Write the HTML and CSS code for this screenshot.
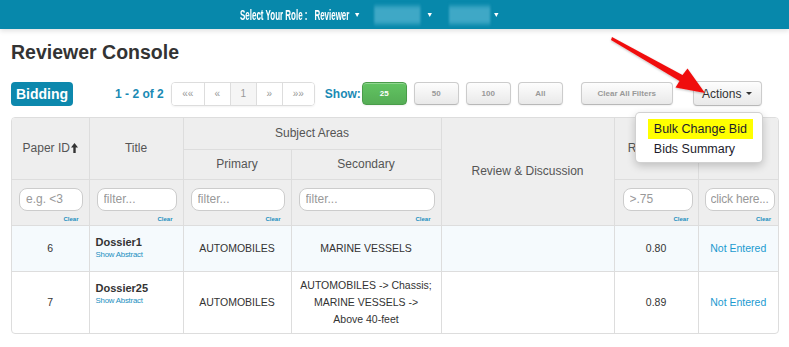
FILE: index.html
```html
<!DOCTYPE html>
<html>
<head>
<meta charset="utf-8">
<link rel="stylesheet" href="styles.css">
</head>
<body>
<header class="topbar">
  <nav class="nav">
    <span class="nav-label">Select Your Role :</span>
    <span class="nav-item">Reviewer<i class="caret"></i></span>
    <span class="nav-item i2"><span class="blur bw1"></span><i class="caret ca2"></i></span>
    <span class="nav-item i3"><span class="blur bw2"></span><i class="caret ca3"></i></span>
  </nav>
</header>

<main class="page">
  <h1 class="title">Reviewer Console</h1>

  <div class="toolbar">
    <span class="label">Bidding</span>
    <span class="count">1 - 2 of 2</span>
    <div class="pager">
      <span class="pg pg-wide">&laquo;&laquo;</span>
      <span class="pg">&laquo;</span>
      <span class="pg pg-active">1</span>
      <span class="pg">&raquo;</span>
      <span class="pg pg-wide">&raquo;&raquo;</span>
    </div>
    <span class="show">Show:</span>
    <div class="sizes">
      <button class="btn btn-size btn-green">25</button>
      <button class="btn btn-size">50</button>
      <button class="btn btn-size">100</button>
      <button class="btn btn-size">All</button>
    </div>
    <button class="btn btn-clear">Clear All Filters</button>
    <div class="actions">
      <button class="btn btn-actions">Actions<i class="caret dark"></i></button>
      <ul class="menu">
        <li class="menu-item hl">Bulk Change Bid</li>
        <li class="menu-item">Bids Summary</li>
      </ul>
    </div>
  </div>

  <div class="grid-wrap">
    <table class="grid">
      <colgroup>
        <col class="col1"><col class="col2"><col class="col3"><col class="col4"><col class="col5"><col class="col6"><col class="col7">
      </colgroup>
      <thead>
        <tr class="hr1">
          <th rowspan="2">Paper ID<svg class="sort" width="7" height="10" viewBox="0 0 7 10"><path d="M3.5 0 L7 4.5 H4.7 V10 H2.3 V4.5 H0 Z" fill="#333"/></svg></th>
          <th rowspan="2">Title</th>
          <th colspan="2">Subject Areas</th>
          <th rowspan="3">Review &amp; Discussion</th>
          <th rowspan="2">Relevance</th>
          <th rowspan="2">Bid</th>
        </tr>
        <tr class="hr2">
          <th>Primary</th>
          <th>Secondary</th>
        </tr>
        <tr class="filters">
          <td><input class="flt" placeholder="e.g. &lt;3"><div class="clear">Clear</div></td>
          <td><input class="flt" placeholder="filter..."><div class="clear">Clear</div></td>
          <td><input class="flt" placeholder="filter..."><div class="clear">Clear</div></td>
          <td><input class="flt" placeholder="filter..."><div class="clear">Clear</div></td>
          <td class="rel-f"><input class="flt" placeholder="&gt;.75"><div class="clear">Clear</div></td>
          <td class="bid-f"><input class="flt flt-tight" placeholder="click here..."><div class="clear">Clear</div></td>
        </tr>
      </thead>
      <tbody>
        <tr class="row odd">
          <td class="num">6</td>
          <td class="ttl"><div class="doc">Dossier1</div><div class="abs">Show Abstract</div></td>
          <td class="ctr">AUTOMOBILES</td>
          <td class="ctr">MARINE VESSELS</td>
          <td></td>
          <td class="ctr">0.80</td>
          <td class="ctr link">Not Entered</td>
        </tr>
        <tr class="row">
          <td class="num">7</td>
          <td class="ttl"><div class="doc">Dossier25</div><div class="abs">Show Abstract</div></td>
          <td class="ctr">AUTOMOBILES</td>
          <td class="ctr multi">AUTOMOBILES -&gt; Chassis;<br>MARINE VESSELS -&gt;<br>Above 40-feet</td>
          <td></td>
          <td class="ctr">0.89</td>
          <td class="ctr link">Not Entered</td>
        </tr>
      </tbody>
    </table>
  </div>
</main>

<svg class="arrow" width="789" height="347" viewBox="0 0 789 347">
  <defs>
    <filter id="sh" x="-10%" y="-10%" width="120%" height="130%">
      <feDropShadow dx="0" dy="1" stdDeviation="1" flood-color="#000" flood-opacity="0.25"/>
    </filter>
  </defs>
  <polygon filter="url(#sh)" fill="#f01010" points="612,37 682.5,75 687.5,68.5 705,93 675.5,87.5 679.5,81 611,40"/>
</svg>
</body>
</html>
```

FILE: styles.css
```css
* { box-sizing: border-box; }

body {
  margin: 0;
  position: relative;
  font-family: "Liberation Sans", Arial, sans-serif;
  color: #333;
  background: #fff;
}

/* ---------- top bar ---------- */
.topbar {
  height: 29px;
  background: #0788ab;
  box-shadow: 0 2px 5px rgba(0, 0, 0, 0.12);
  display: flex;
  align-items: center;
  padding-left: 240px;
  color: #fff;
}
.nav {
  display: flex;
  align-items: center;
  font-family: "Liberation Sans", Arial, sans-serif;
  font-weight: bold;
  font-size: 14.5px;
  white-space: nowrap;
  transform: scaleX(0.55);
  transform-origin: 0 50%;
}
.nav-label { margin-right: 12.5px; }
.nav-item {
  display: flex;
  align-items: center;
}
.nav-item.i2 { margin-left: 27.5px; }
.nav-item.i3 { margin-left: 31px; }
.caret {
  display: inline-block;
  width: 0;
  height: 0;
  border-left: 4px solid transparent;
  border-right: 4px solid transparent;
  border-top: 4px solid #fff;
  margin-left: 10px;
}
.caret.ca2 { margin-left: 13px; }
.caret.ca3 { margin-left: 7px; }
.blur {
  display: inline-block;
  height: 18px;
  background: rgba(120, 200, 225, 0.5);
  filter: blur(2px);
}
.blur.bw1 { width: 84px; }
.blur.bw2 { width: 75px; }

/* ---------- page ---------- */
.page { padding: 0 10px 0 11px; }

.title {
  margin: 12px 0 18px;
  font-size: 19.5px;
  line-height: 22px;
  font-weight: bold;
  color: #333;
}

.toolbar {
  display: flex;
  align-items: center;
  height: 25px;
  margin-bottom: 11px;
}
.label {
  display: inline-block;
  height: 24px;
  line-height: 24px;
  padding: 0 5px;
  background: #0d88ad;
  color: #fff;
  font-weight: bold;
  font-size: 14px;
  border-radius: 4px;
}
.count {
  margin-left: 42px;
  color: #1a8ab4;
  font-weight: bold;
  font-size: 12px;
}
.pager {
  display: flex;
  margin-left: 7px;
  height: 24px;
  border: 1px solid #ddd;
  border-radius: 4px;
  overflow: hidden;
  box-shadow: 0 1px 2px rgba(0, 0, 0, 0.05);
}
.pg {
  width: 26px;
  text-align: center;
  line-height: 22px;
  font-size: 10px;
  color: #999;
  background: #fff;
  border-left: 1px solid #ddd;
}
.pg:first-child { border-left: none; }
.pg-wide { width: 32px; }
.pg-active { background: #f5f5f5; }

.show {
  margin-left: 10px;
  margin-right: 1px;
  color: #1a8ab4;
  font-weight: bold;
  font-size: 12px;
}
.sizes {
  display: flex;
  gap: 7px;
}
.btn {
  font-family: "Liberation Sans", Arial, sans-serif;
  height: 23px;
  padding: 0;
  border: 1px solid #ccc;
  border-bottom-color: #b8b8b8;
  border-radius: 4px;
  background: linear-gradient(#fdfdfd, #e9e9e9);
  box-shadow: inset 0 1px 0 rgba(255, 255, 255, 0.3), 0 1px 2px rgba(0, 0, 0, 0.06);
  color: #999;
  cursor: pointer;
}
.btn-size {
  width: 45px;
  font-size: 8px;
  font-weight: bold;
}
.btn-green {
  background: linear-gradient(#62c462, #55ad55);
  border-color: #4a9c4a;
  color: #fff;
}
.btn-clear {
  width: 92px;
  margin-left: 18px;
  font-size: 8px;
  font-weight: bold;
}
.actions {
  position: relative;
  margin-left: 20px;
}
.btn-actions {
  display: flex;
  align-items: center;
  justify-content: center;
  width: 69px;
  height: 25px;
  font-size: 12px;
  color: #333;
}
.caret.dark {
  border-left-width: 3px;
  border-right-width: 3px;
  border-top: 3px solid #333;
  margin-left: 5px;
}
.menu {
  position: absolute;
  top: 31px;
  right: -1px;
  width: 128px;
  margin: 0;
  padding: 6px 0 3px;
  list-style: none;
  background: #fff;
  border: 1px solid rgba(0, 0, 0, 0.18);
  border-radius: 5px;
  box-shadow: 0 3px 8px rgba(0, 0, 0, 0.2);
  z-index: 5;
}
.menu-item {
  margin: 0 9px 0 12px;
  padding: 0 6px;
  line-height: 20px;
  font-size: 12.5px;
  color: #1c1c2c;
  white-space: nowrap;
}
.menu-item.hl { background: #ffff00; }

/* ---------- table ---------- */
.grid-wrap {
  width: 768px;
  border: 1px solid #ddd;
  border-radius: 4px;
  overflow: hidden;
}
.grid {
  width: 766px;
  border-collapse: collapse;
  border-style: hidden;
  table-layout: fixed;
}
.col1 { width: 77px; }
.col2 { width: 94px; }
.col3 { width: 108px; }
.col4 { width: 150px; }
.col5 { width: 173px; }
.col6 { width: 84px; }
.col7 { width: 80px; }

.grid th,
.grid td {
  border: 1px solid #ddd;
  padding: 0;
}
.grid th {
  background: #eee;
  color: #555;
  font-weight: normal;
  font-size: 12px;
  text-align: center;
  vertical-align: middle;
}
.hr1 { height: 31px; }
.hr2 { height: 30px; }
.sort { margin-left: 1px; vertical-align: -1px; }

.grid .filters td {
  background: #eee;
  height: 46px;
  padding: 8px 6px 0 7px;
  vertical-align: top;
}
.grid .filters td.rel-f { padding-left: 8px; padding-right: 5px; }
.grid .filters td.bid-f { padding-left: 6px; padding-right: 3px; }
.flt {
  display: block;
  width: 100%;
  height: 23px;
  padding: 0 2px 0 6px;
  border: 1px solid #ccc;
  border-radius: 8px;
  background: #fff;
  font-family: "Liberation Sans", Arial, sans-serif;
  font-size: 12px;
  color: #555;
  outline: none;
}
.flt.flt-tight { padding: 0 0 0 5px; letter-spacing: -0.2px; }
.flt::placeholder { color: #999; }
.clear {
  margin-top: 4px;
  padding-right: 4px;
  text-align: right;
  font-size: 6px;
  line-height: 8px;
  font-weight: bold;
  color: #1a8fc0;
}

.row td {
  font-size: 10.5px;
  color: #333;
  vertical-align: middle;
}
.row.odd td { background: #f5fafd; }
.row.odd { height: 46px; }
.num, .ctr { text-align: center; }
.grid .ctr { padding: 0 6px; }
.grid .multi { line-height: 17px; padding: 5px 6px; }
.grid .ttl {
  vertical-align: top;
  padding: 9px 6px 0 6px;
}
.doc {
  font-weight: bold;
  font-size: 11px;
  line-height: 14px;
}
.abs {
  font-size: 7.8px;
  line-height: 12px;
  color: #1a8fc0;
  letter-spacing: -0.2px;
}
.grid .link { color: #1b9ad0; }

/* ---------- annotation arrow ---------- */
.arrow {
  position: absolute;
  top: 0;
  left: 0;
  pointer-events: none;
  z-index: 10;
}
```
